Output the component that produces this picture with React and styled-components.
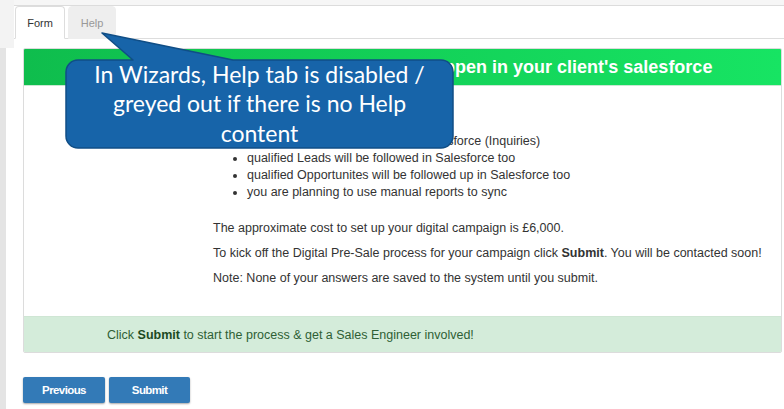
import React from 'react';
import styled, { createGlobalStyle } from 'styled-components';

const GlobalStyle = createGlobalStyle`
  html, body {
    margin: 0;
    padding: 0;
    background: #ffffff;
  }

  body {
    font-family: "Liberation Sans", Arial, sans-serif;
    color: #333333;
  }

  #root {
    width: 784px;
    height: 409px;
    overflow: hidden;
  }
`;

const Page = styled.div`
  position: relative;
  display: flex;
  flex-direction: row;
  width: 784px;
  height: 409px;
`;

const Gutter = styled.div`
  display: flex;
  flex-direction: column;
  width: 14px;
  flex-shrink: 0;
`;

const GutterTop = styled.div`
  height: 48px;
  flex-shrink: 0;
  background: #f3f3f3;
`;

const GutterBottom = styled.div`
  flex: 1;
  background: linear-gradient(to right, #e4e4e4 6px, #ffffff 6px);
`;

const Main = styled.div`
  flex: 1;
  display: flex;
  flex-direction: column;

  & > * {
    flex-shrink: 0;
  }
`;

const TopStrip = styled.div`
  height: 5px;
  background: #f6f6f6;
  border-bottom: 1px solid #dcdcdc;
`;

const TabBar = styled.div`
  display: flex;
  flex-direction: row;
  gap: 3px;
  height: 32px;
  padding-left: 1px;
  border-bottom: 1px solid #dddddd;
`;

const Tab = styled.div`
  display: flex;
  align-items: center;
  justify-content: center;
  box-sizing: border-box;
  width: ${(props) => props.$width}px;
  height: 33px;
  margin-bottom: -1px;
  border: 1px solid ${(props) => (props.$active ? '#dddddd' : '#eeeeee')};
  border-bottom-color: ${(props) => (props.$active ? '#ffffff' : '#eeeeee')};
  border-radius: 4px 4px 0 0;
  background: ${(props) => (props.$active ? '#ffffff' : '#eeeeee')};
  color: ${(props) => (props.$active ? '#333333' : '#999999')};
  font-size: 11px;
  cursor: ${(props) => (props.$active ? 'default' : 'not-allowed')};
`;

const Content = styled.div`
  padding: 9px 2px 0 9px;
`;

const Card = styled.div`
  border: 1px solid #dcdcdc;
  border-radius: 2px;
  background: #ffffff;
  overflow: hidden;
`;

const CardHeader = styled.div`
  display: flex;
  align-items: center;
  height: 36px;
  padding-left: 257px;
  background: linear-gradient(to right, #0fbd4d, #17e463);
  border-bottom: 1px solid #c9e8d2;
  color: #ffffff;
  font-size: 18px;
  font-weight: bold;
  white-space: nowrap;
`;

const CardBody = styled.div`
  padding: 5px 0 29px 189px;
  font-size: 12.5px;
  line-height: 17px;
  white-space: nowrap;
`;

const Para = styled.p`
  margin: 0 0 8px;

  &:last-child {
    margin-bottom: 0;
  }
`;

const List = styled.ul`
  margin: 0 0 19px;
  padding-left: 34px;
`;

const Alert = styled.div`
  display: flex;
  align-items: center;
  height: 35px;
  padding-left: 83px;
  background: #d4ecda;
  border-top: 1px solid #cfe6d4;
  color: #2f5f35;
  font-size: 12.5px;

  b {
    color: #1d4a22;
  }
`;

const Actions = styled.div`
  display: flex;
  flex-direction: row;
  gap: 4px;
  margin: 24px 0 0 9px;
`;

const Button = styled.button`
  width: ${(props) => props.$width}px;
  height: 26px;
  padding: 0;
  border: none;
  border-radius: 2px;
  background: #337ab7;
  box-shadow: 0 1px 2px rgba(0, 0, 0, 0.35);
  color: #ffffff;
  font-family: "Liberation Sans", Arial, sans-serif;
  font-size: 11.5px;
  font-weight: bold;
  letter-spacing: -0.6px;
  cursor: pointer;
`;

const Callout = styled.div`
  position: absolute;
  left: 64px;
  top: 31px;
  width: 392px;
  height: 120px;
  pointer-events: none;
`;

const CalloutShape = styled.svg`
  position: absolute;
  left: 0;
  top: 0;
`;

const CalloutText = styled.div`
  position: absolute;
  left: 2px;
  top: 29px;
  width: 387px;
  height: 88px;
  display: flex;
  align-items: center;
  justify-content: center;
  text-align: center;
  color: #ffffff;
  font-family: Lato, "Open Sans", sans-serif;
  font-size: 23px;
  line-height: 29.5px;
  white-space: nowrap;
`;

const items = [
  'your client already uses Salesforce',
  'new Leads will be generated in Salesforce (Inquiries)',
  'qualified Leads will be followed in Salesforce too',
  'qualified Opportunites will be followed up in Salesforce too',
  'you are planning to use manual reports to sync',
];

export default function App() {
  return (
    <>
      <GlobalStyle />
      <Page>
        <Gutter>
          <GutterTop />
          <GutterBottom />
        </Gutter>
        <Main>
          <TopStrip />
          <TabBar>
            <Tab $active $width={50}>Form</Tab>
            <Tab $width={48}>Help</Tab>
          </TabBar>
          <Content>
            <Card>
              <CardHeader>This is what will happen in your client's salesforce</CardHeader>
              <CardBody>
                <Para>Based on your answers:</Para>
                <List>
                  {items.map((item) => (
                    <li key={item}>{item}</li>
                  ))}
                </List>
                <Para>The approximate cost to set up your digital campaign is £6,000.</Para>
                <Para>
                  To kick off the Digital Pre-Sale process for your campaign click <b>Submit</b>. You will be
                  contacted soon!
                </Para>
                <Para>Note: None of your answers are saved to the system until you submit.</Para>
              </CardBody>
              <Alert>
                <span>
                  Click <b>Submit</b> to start the process &amp; get a Sales Engineer involved!
                </span>
              </Alert>
            </Card>
          </Content>
          <Actions>
            <Button $width={82}>Previous</Button>
            <Button $width={81}>Submit</Button>
          </Actions>
        </Main>

        <Callout>
          <CalloutShape width="392" height="120" viewBox="0 0 392 120">
            <path
              d="M 14 29 L 69 29 L 38 2 L 169 29 L 377 29 A 12 12 0 0 1 389 41 L 389 105 A 12 12 0 0 1 377 117 L 14 117 A 12 12 0 0 1 2 105 L 2 41 A 12 12 0 0 1 14 29 Z"
              fill="#1764a9"
              stroke="#104e86"
              strokeWidth="1.5"
              strokeLinejoin="round"
            />
          </CalloutShape>
          <CalloutText>
            In Wizards, Help tab is disabled /
            <br />
            greyed out if there is no Help
            <br />
            content
          </CalloutText>
        </Callout>
      </Page>
    </>
  );
}
